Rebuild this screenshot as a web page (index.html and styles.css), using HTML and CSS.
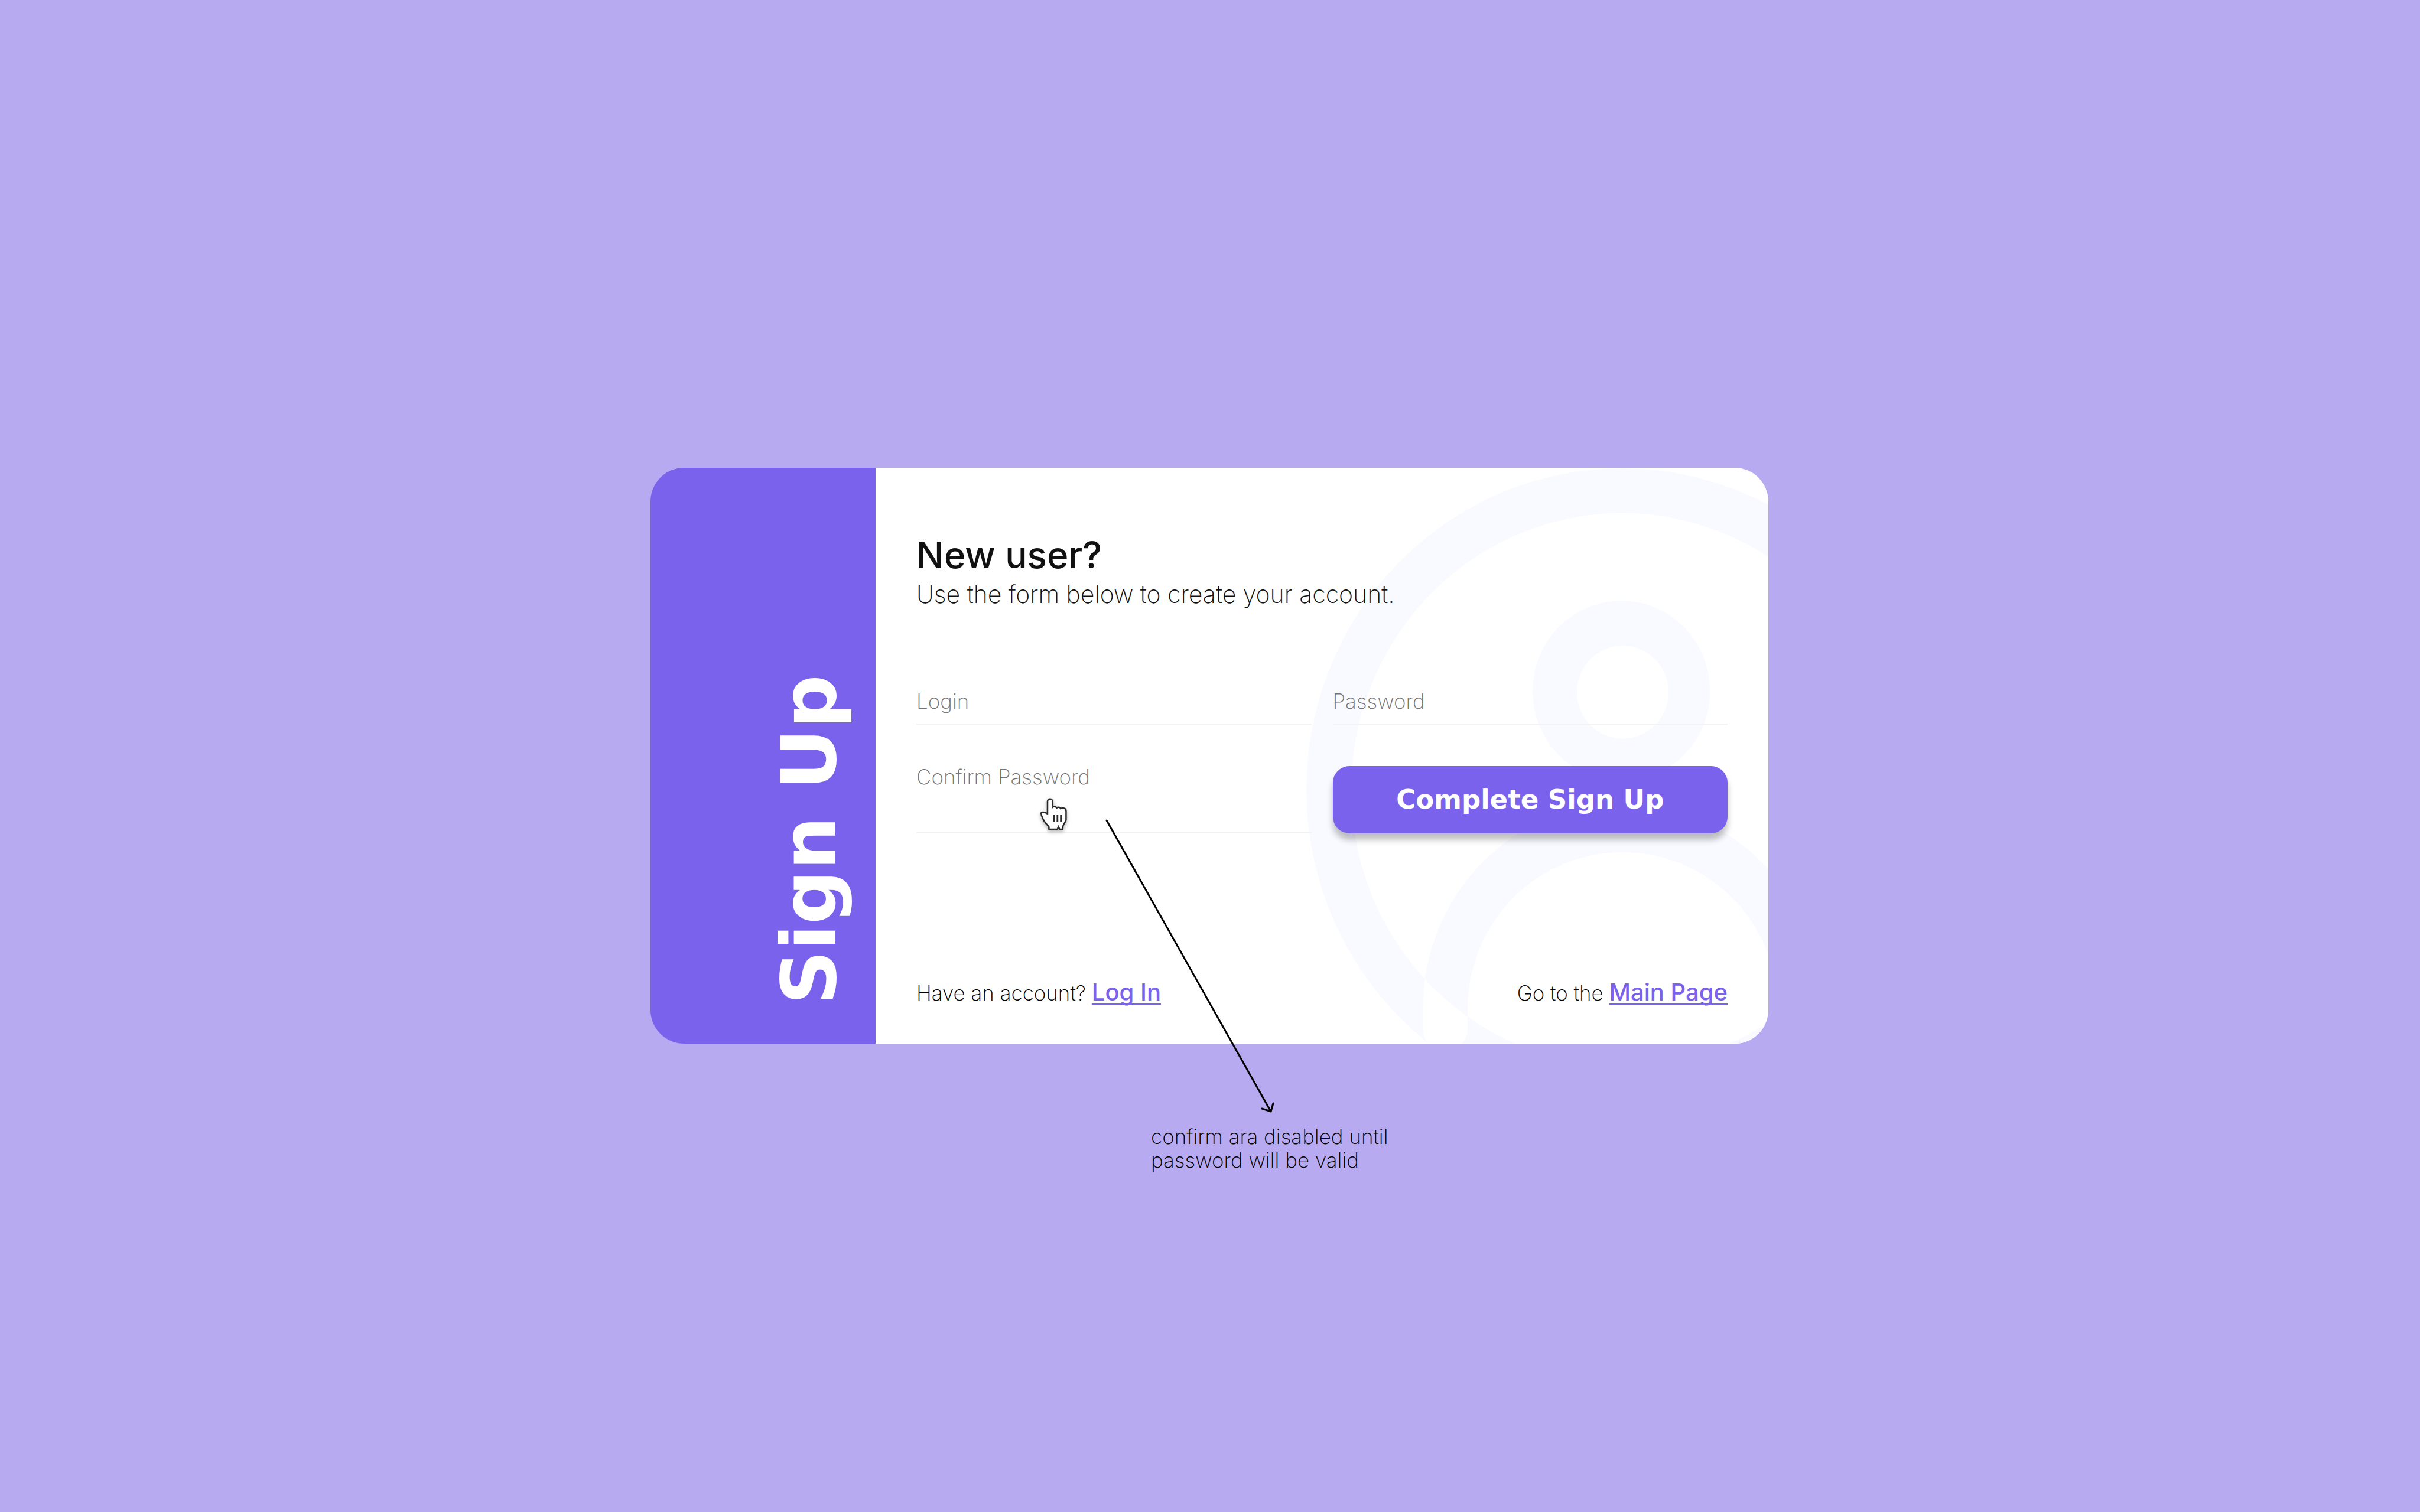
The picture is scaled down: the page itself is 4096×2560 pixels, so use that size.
FILE: index.html
```html
<!DOCTYPE html>
<html lang="en">
<head>
  <meta charset="utf-8">
  <meta name="viewport" content="width=device-width, initial-scale=1">
  <title>Sign Up</title>
  <link rel="stylesheet" href="styles.css">
</head>
<body>
  <main class="page">
    <section class="card">
      <header class="banner">
        <h1 class="banner-title">Sign Up</h1>
      </header>

      <div class="panel">
        <svg class="watermark" viewBox="2316 834 840 1029" preserveAspectRatio="xMaxYMin slice" aria-hidden="true">
          <path fill-rule="evenodd" d="
            M2331 1409a564 574 0 1 0 1128 0a564 574 0 1 0 -1128 0z
            M2411 1409a484 494 0 1 0 968 0a484 494 0 1 0 -968 0z
            M2735 1233a158 161 0 1 0 317 0a158 161 0 1 0 -317 0z
            M2814 1235a82 83 0 1 0 164 0a82 83 0 1 0 -164 0z
            M2539 1836V1800a356 366 0 0 1 712 0V1836a40 40 0 0 1 -78 0V1800a277 279 0 0 0 -554 0L2619 1836a40 40 0 0 1 -80 0z"/>
        </svg>

        <div class="content">
          <h2 class="heading">New user?</h2>
          <p class="lead">Use the form below to create your account.</p>

          <form class="form">
            <div class="field">
              <label for="login">Login</label>
              <input id="login" type="text" autocomplete="username">
            </div>
            <div class="field">
              <label for="password">Password</label>
              <input id="password" type="password" autocomplete="new-password">
            </div>
            <div class="field field-tall">
              <label for="confirm">Confirm Password</label>
              <input id="confirm" type="password" autocomplete="new-password">
            </div>
            <button class="submit" type="submit">Complete Sign Up</button>
          </form>

          <footer class="links">
            <p class="link-line">Have an account? <a href="#login">Log In</a></p>
            <p class="link-line">Go to the <a href="#main">Main Page</a></p>
          </footer>
        </div>
      </div>

      <svg class="pointer" viewBox="100 60 170 210" aria-hidden="true">
        <path class="pointer-hand" d="M150 164V92C150 74 177 74 178 92V122C184 117 194 119 200 126C207 120 217 123 221 130C232 124 250 126 250 143V190C250 200 234 214 233 226L232 241H215L209 228L203 241H158L157 227C143 212 133 202 127 188C120 173 116 166 115 156C117 145 146 148 150 164z"/>
        <path class="pointer-lines" d="M185 165V201M203.500 165V201M222 165V201"/>
      </svg>

      <svg class="arrow" viewBox="0 0 290 500" aria-hidden="true">
        <path d="M3 3L281 496M266 491L281 496L285 482"/>
      </svg>
      <p class="note">confirm ara disabled until password will be valid</p>
    </section>
  </main>
</body>
</html>
```
FILE: styles.css
```css
:root {
  --violet: #7a62ed;
  --lilac: #b7aaf0;
  --ink: #111111;
  --muted: #757575;
  --rule: #f2f2f2;
  --mist: #f9faff;
}

* {
  box-sizing: border-box;
}

body {
  margin: 0;
  background: var(--lilac);
  color: #000000;
  font-family: Inter, "Liberation Sans", sans-serif;
  font-size: 35px;
  font-weight: 250;
  line-height: 40px;
}

h1,
h2,
p {
  margin: 0;
}

.page {
  display: flex;
  align-items: center;
  justify-content: center;
  min-height: 100vh;
  padding: 0 2px 2px 0;
}

.card {
  position: relative;
  display: grid;
  grid-template-columns: 381px 1fr;
  width: 100%;
  max-width: 1892px;
}

.banner {
  display: flex;
  align-items: flex-end;
  justify-content: flex-end;
  padding: 0 40px 66px 0;
  border-radius: 57px 0 0 57px;
  background: var(--violet);
}

.banner-title {
  color: #ffffff;
  font-family: "DejaVu Sans", sans-serif;
  font-size: 128px;
  font-weight: 700;
  line-height: 144px;
  white-space: nowrap;
  writing-mode: vertical-rl;
  transform: rotate(180deg);
}

.panel {
  position: relative;
  overflow: hidden;
  border-radius: 0 57px 57px 0;
  background: #ffffff;
}

.watermark {
  position: absolute;
  top: 0;
  right: 0;
  height: 100%;
  fill: var(--mist);
}

.content {
  position: relative;
  padding: 112px 69px 64px;
}

.heading {
  color: var(--ink);
  font-size: 62px;
  font-weight: 500;
  line-height: 72px;
}

.lead {
  margin-top: 6px;
  color: var(--ink);
  font-size: 41px;
  line-height: 48px;
}

.form {
  display: grid;
  grid-template-columns: 1fr 1fr;
  gap: 68px 36px;
  margin-top: 137px;
}

.field {
  display: grid;
  height: 60px;
}

.field-tall {
  height: 116px;
}

.field label,
.field input {
  grid-area: 1 / 1;
}

.field label {
  align-self: start;
  color: var(--muted);
  pointer-events: none;
}

.field input {
  width: 100%;
  height: 100%;
  padding: 0;
  border: 0;
  border-bottom: 2px solid var(--rule);
  outline: 0;
  background: transparent;
  font: inherit;
}

.submit {
  align-self: end;
  height: 114px;
  padding: 0;
  border: 0;
  border-radius: 28px;
  background: var(--violet);
  box-shadow: 0 11px 11px rgba(0, 0, 0, 0.25);
  color: #ffffff;
  font-family: "DejaVu Sans", sans-serif;
  font-size: 45px;
  font-weight: 700;
}

.links {
  display: flex;
  justify-content: space-between;
  margin-top: 247px;
}

.link-line {
  line-height: 44px;
}

.link-line a {
  color: var(--violet);
  font-size: 40px;
  font-weight: 500;
  text-decoration: underline;
  text-decoration-skip-ink: none;
  text-decoration-thickness: 2px;
  text-underline-offset: 5px;
}

.pointer {
  position: absolute;
  top: 555px;
  left: 656px;
  width: 54px;
  height: 66px;
  filter: drop-shadow(0 3px 3px rgba(0, 0, 0, 0.3));
}

.pointer-hand {
  fill: #ffffff;
  stroke: #2b2b2b;
  stroke-width: 8;
}

.pointer-lines {
  fill: none;
  stroke: #2b2b2b;
  stroke-width: 9;
}

.arrow {
  position: absolute;
  top: 594px;
  left: 769px;
  width: 290px;
  height: 500px;
  fill: none;
  stroke: #000000;
  stroke-width: 3;
  stroke-linecap: round;
  stroke-linejoin: round;
  pointer-events: none;
}

.note {
  position: absolute;
  top: 1112px;
  left: 847px;
  width: 440px;
}
```
